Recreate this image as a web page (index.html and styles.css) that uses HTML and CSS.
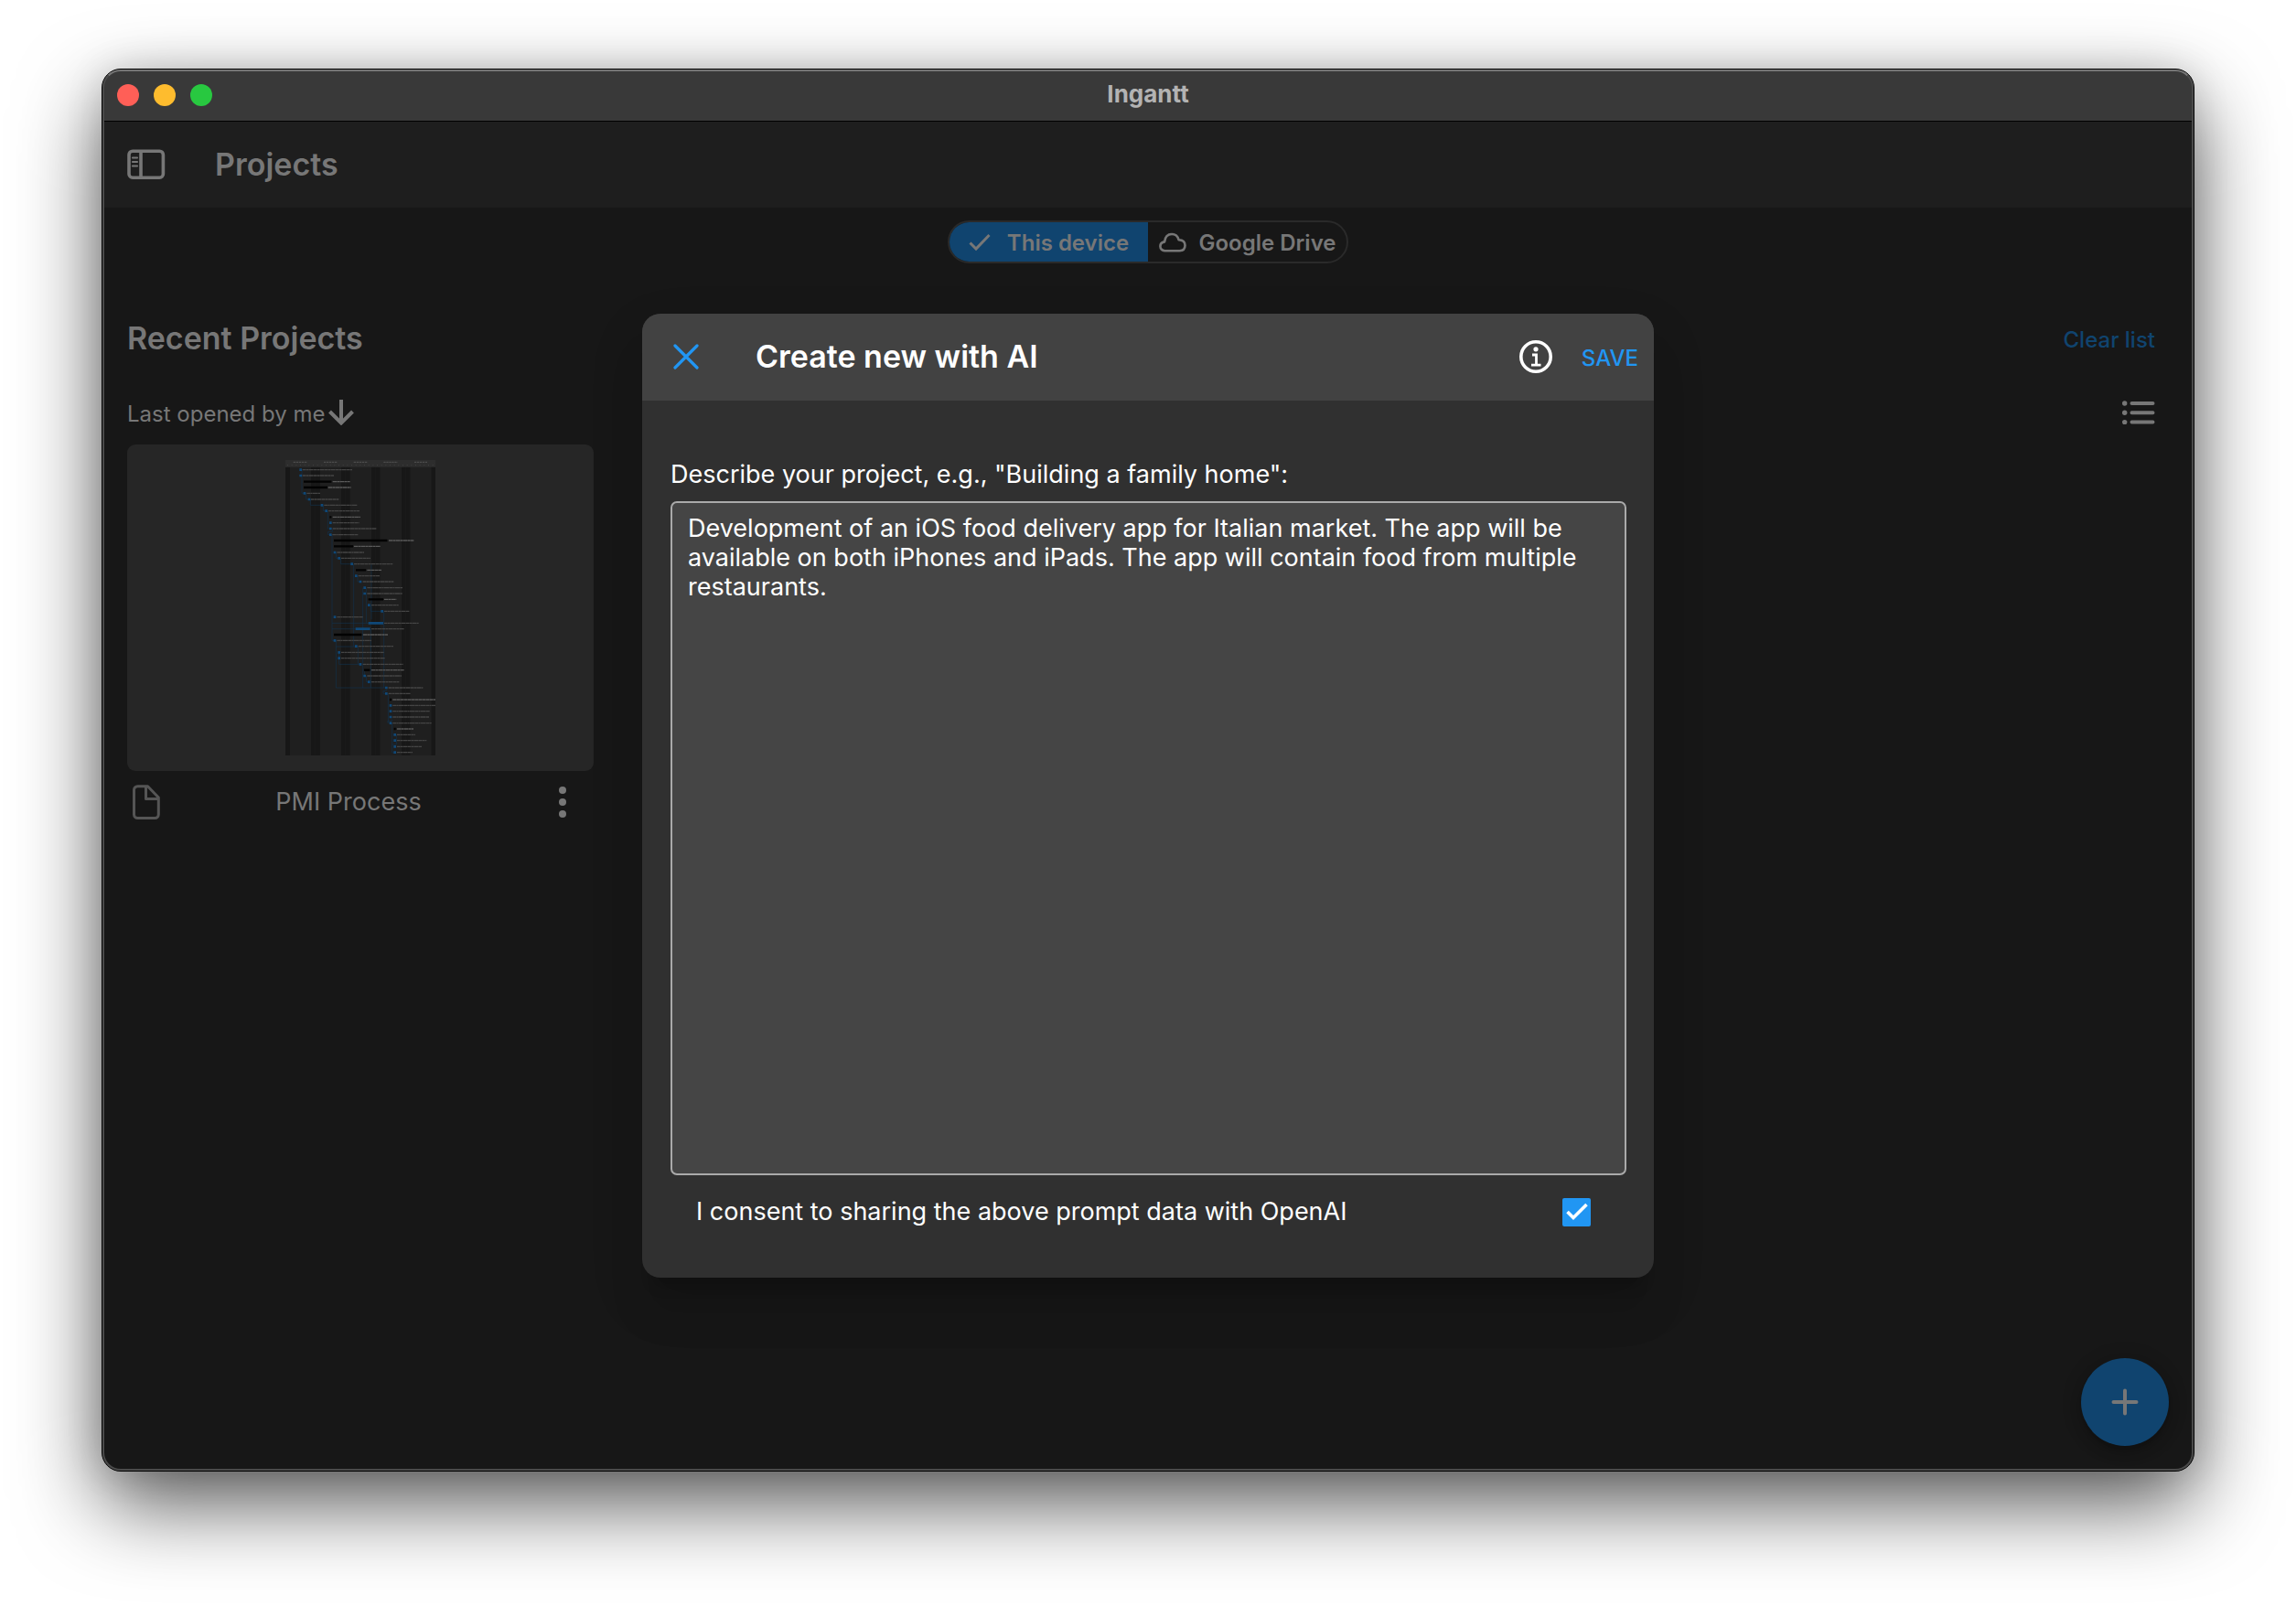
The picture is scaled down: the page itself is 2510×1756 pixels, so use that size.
FILE: index.html
```html
<!DOCTYPE html>
<html lang="en">
<head>
<meta charset="utf-8">
<meta name="viewport" content="width=device-width, initial-scale=1">
<title>Ingantt</title>
<link rel="stylesheet" href="styles.css">
</head>
<body>
<div class="window">
  <header class="titlebar">
    <div class="lights">
      <button class="light light-close" aria-label="Close"></button>
      <button class="light light-minimize" aria-label="Minimize"></button>
      <button class="light light-zoom" aria-label="Zoom"></button>
    </div>
    <div class="window-title">Ingantt</div>
  </header>

  <div class="app">
    <nav class="navbar">
      <button class="icon-button" aria-label="Toggle sidebar">
        <svg width="42" height="34" viewBox="0 0 42 34" fill="none" stroke="currentColor" stroke-width="3.6">
          <rect x="2" y="2.2" width="37.4" height="29" rx="4"/>
          <path d="M15 2v29"/>
          <path d="M6 9.5h5M6 14h5M6 18.5h5" stroke-width="2.2" stroke-linecap="round"/>
        </svg>
      </button>
      <h1 class="navbar-title">Projects</h1>
    </nav>

    <main class="content">
      <div class="segmented">
        <button class="segment segment-active">
          <svg width="24" height="20" viewBox="0 0 24 20" fill="none" stroke="currentColor" stroke-width="3"><path d="M1.5 10.500l6.500 6.500L22.500 2"/></svg>
          <span>This device</span>
        </button>
        <button class="segment">
          <svg width="30" height="22" viewBox="0 0 30 22" fill="none" stroke="currentColor" stroke-width="2.600" stroke-linejoin="round"><path d="M6.500 20.200C3.500 20.200 1.400 18 1.400 15.300c0-2.500 1.900-4.500 4.700-4.900C6.700 5 9.700 2 14 2c4 0 6.600 2.300 7.600 6.300 4.200.2 6.900 2.500 6.900 6 0 3.600-2.300 5.900-6 5.900z"/></svg>
          <span>Google Drive</span>
        </button>
      </div>

      <div class="row heading-row">
        <h2 class="heading">Recent Projects</h2>
        <a class="clear-link" href="#">Clear list</a>
      </div>

      <div class="row sort-row">
        <button class="sort-button">
          <span>Last opened by me</span>
          <svg width="28" height="28" viewBox="0 0 28 28" fill="none" stroke="currentColor" stroke-width="4"><path d="M14 0v26M1.500 13L14 25.500 26.500 13"/></svg>
        </button>
        <button class="icon-button" aria-label="List view">
          <svg width="36" height="26" viewBox="0 0 36 26" stroke="currentColor" fill="currentColor" stroke-linecap="round">
            <path d="M10.500 3h23M10.500 13.300h23M10.500 23.600h23" stroke-width="4"/>
            <g stroke="none"><circle cx="2.700" cy="3" r="2.700"/><circle cx="2.700" cy="13.300" r="2.700"/><circle cx="2.700" cy="23.600" r="2.700"/></g>
          </svg>
        </button>
      </div>

      <article class="project">
        <div class="preview">
          <svg class="gantt" width="164" height="323" viewBox="66 69 492 969" preserveAspectRatio="none" fill="none">
            <rect x="66" y="69" width="492" height="969" fill="#1f1f1f"/>
            <path fill="#171717" d="M66 92h15v946H66zM150 92h30v946h-30zM249 92h29v946h-29zM348 92h28v946h-28zM447 92h28v946h-28zM545 92h13v946h-13z"/>
            <path stroke="#1f1f1f" stroke-width="1.500" d="M163 92v946M262 92v946M361 92v946M460 92v946"/>
            <rect x="66" y="69" width="492" height="23" fill="#2d2d2d"/>
            <path stroke="#4c4c4c" stroke-width="4" stroke-dasharray="7 2" d="M92 76h46M192 76h43M290 76h46M388 76h46M489 76h42"/>
            <path stroke="#414141" stroke-width="3" stroke-dasharray="3 11" d="M72 86h484"/>
            <path stroke="#12324c" stroke-width="2" d="M120 101v77h10M134 178v20h10M148 198v19h38M190 217v19h10M205 236v58h10M220 296v8h-14v10h8M219 314v347h9M219 604h119M219 623h77M232 372v19h10M248 391v19h36M290 410v271M232 681h66M303 449v19h10M320 488v328M331 488v116M346 545v20h37M389 565v251M232 661v155h165M242 700v39h70M304 681v58M325 758v19M331 777v20h10M346 623v193M348 410v182M397 822v4h-10v9h10M403 835v97M416 920v4h-14v8M416 932v97h9M430 970v32h-14"/>
            <path stroke="#0f4878" stroke-width="8" d="M112 101h8M112 120h8M125 178h8M140 198h8M182 217h8M196 236h8M210 275h8M210 294h8M210 314h8M224 372h8M238 391h8M280 410h8M294 449h8M308 468h8M322 488h8M322 507h8M336 545h8M379 565h8M224 584h8M224 661h8M294 680h8M238 700h8M238 719h8M308 739h8M322 777h8M336 797h8M393 816h8M393 835h8M407 874h8M407 893h8M407 912h8M407 932h8M421 970h8M421 989h8M421 1009h8M421 1028h8M338 604h49M296 623h48"/>
            <path stroke="#020202" stroke-width="7" d="M126 140h91M126 159h78M211 256h6M225 333h175M225 352h63M297 430h33M338 526h49M225 642h91M324 758h19M408 855h6M422 951h6"/>
            <path stroke="#454545" stroke-width="4" stroke-dasharray="11 1 7 1 15 1" d="M122 101h163M122 120h103M136 178h44M150 198h92M193 217h109M207 236h102M221 275h87M221 294h144M220 314h85M235 372h89M249 391h96M291 410h127M305 449h70M320 468h101M334 488h116M334 507h115M348 545h89M390 565h82M235 584h86M390 604h113M348 623h108M235 661h113M305 680h115M249 700h140M249 719h144M320 739h132M334 777h113M348 797h91M404 816h113M404 835h73M418 874h140M418 893h122M418 912h120M418 932h127M432 970h60M432 989h97M432 1009h81M432 1028h51"/>
            <path stroke="#5a5a5a" stroke-width="4" stroke-dasharray="13 1 9 1" d="M221 140h57M206 159h75M221 256h91M405 333h82M291 352h87M334 430h48M390 526h40M321 642h81M348 758h107M418 855h140M432 951h54"/>
          </svg>
        </div>
        <div class="project-footer">
          <svg class="file-icon" width="30" height="38" viewBox="0 0 30 38" fill="none" stroke="currentColor" stroke-width="3" stroke-linejoin="round"><path d="M5.500 1.700h11L28.300 14v18.500a4 4 0 0 1-4 4H5.500a4 4 0 0 1-4-4V5.700a4 4 0 0 1 4-4zM14.500 2v13.500H28"/></svg>
          <span class="project-name">PMI Process</span>
          <button class="icon-button more" aria-label="More">
            <svg width="8" height="34" viewBox="0 0 8 34" fill="currentColor"><circle cx="4" cy="4" r="4"/><circle cx="4" cy="17" r="4"/><circle cx="4" cy="30" r="4"/></svg>
          </button>
        </div>
      </article>
    </main>

    <button class="fab" aria-label="New project">
      <svg width="30" height="30" viewBox="0 0 30 30" fill="none" stroke="currentColor" stroke-width="4" stroke-linecap="round"><path d="M15 2.500v25M2.500 15h25"/></svg>
    </button>

    <div class="backdrop">
      <form class="dialog" role="dialog" aria-labelledby="dialog-title">
        <div class="dialog-header">
          <button class="icon-button close" type="button" aria-label="Close">
            <svg width="28" height="28" viewBox="0 0 28 28" fill="none" stroke="currentColor" stroke-width="3.200" stroke-linecap="round"><path d="M2 2l24 24M26 2L2 26"/></svg>
          </button>
          <h2 class="dialog-title" id="dialog-title">Create new with AI</h2>
          <button class="icon-button info" type="button" aria-label="Information">
            <svg width="36" height="36" viewBox="0 0 36 36" fill="none" stroke="currentColor" stroke-width="3.600"><circle cx="18" cy="18" r="16.200"/><circle cx="18" cy="9.800" r="2.600" fill="currentColor" stroke="none"/><path d="M14 16h4.500v11M13 27.200h10.500" stroke-width="2.800"/></svg>
          </button>
          <button class="save" type="button">SAVE</button>
        </div>
        <div class="dialog-body">
          <label class="prompt-label" for="prompt">Describe your project, e.g., "Building a family home":</label>
          <textarea class="prompt" id="prompt" spellcheck="false">Development of an iOS food delivery app for Italian market. The app will be available on both iPhones and iPads. The app will contain food from multiple restaurants.</textarea>
          <div class="consent">
            <label for="consent">I consent to sharing the above prompt data with OpenAI</label>
            <span class="check">
              <input type="checkbox" id="consent" checked>
              <svg width="24" height="20" viewBox="0 0 24 20" fill="none" stroke="#fff" stroke-width="3.600"><path d="M1.500 10l6.500 6.500L22.500 2"/></svg>
            </span>
          </div>
        </div>
      </form>
    </div>
  </div>
</div>
</body>
</html>
```
FILE: styles.css
```css
* {
  box-sizing: border-box;
}

body {
  margin: 0;
  min-height: 100vh;
  padding: 75px 111px 147px;
  display: flex;
  background: #fff;
  color: #777;
  font-family: Inter, "Liberation Sans", sans-serif;
  font-size: 27px;
  line-height: 32px;
}

h1,
h2 {
  margin: 0;
}

button {
  padding: 0;
  border: 0;
  background: none;
  color: inherit;
  font: inherit;
}

svg {
  display: block;
  flex: none;
}

.window {
  position: relative;
  flex: 1;
  display: flex;
  flex-direction: column;
  border: 1px solid #000;
  border-radius: 21px;
  background: #171717;
  box-shadow: 0 36px 90px rgba(0, 0, 0, 0.65), 0 0 40px rgba(0, 0, 0, 0.12);
}

/* Light rim just inside the window edge */
.window::after {
  content: "";
  position: absolute;
  inset: 0;
  border: 2px solid #4a4a4a;
  border-top-color: #757575;
  border-radius: 20px;
  pointer-events: none;
}

.titlebar {
  display: grid;
  grid-template-columns: 1fr auto 1fr;
  align-items: center;
  height: 57px;
  padding: 0 16px;
  border-bottom: 1px solid #000;
  border-radius: 20px 20px 0 0;
  background: #393939;
}

.lights {
  display: flex;
  gap: 16px;
}

.light {
  width: 24px;
  height: 24px;
  border-radius: 50%;
}

.light-close {
  background: #ff5f57;
}

.light-minimize {
  background: #febc2e;
}

.light-zoom {
  background: #28c840;
}

.window-title {
  padding-bottom: 2px;
  color: #b3b3b3;
  font-size: 26px;
  font-weight: 700;
}

.app {
  position: relative;
  flex: 1;
  display: flex;
  flex-direction: column;
}

.navbar {
  display: flex;
  align-items: center;
  gap: 54px;
  height: 94px;
  padding: 0 27px;
  background: #1e1e1e;
}

.navbar-title,
.heading,
.dialog-title {
  font-size: 34px;
  line-height: 40px;
  font-weight: 600;
}

.content {
  flex: 1;
  padding: 14px 27px 28px;
}

.segmented {
  display: grid;
  grid-template-columns: 1fr 1fr;
  width: 438px;
  height: 47px;
  margin: 0 auto;
  overflow: hidden;
  border: 2px solid #2a2a2a;
  border-radius: 24px;
  font-size: 24px;
  font-weight: 600;
}

.segment {
  display: flex;
  align-items: center;
  justify-content: center;
  gap: 14px;
}

.segment span,
.clear-link,
.sort-button span,
.save {
  padding-top: 3px;
}

.segment-active {
  gap: 18px;
  background: #10446f;
}

.row {
  display: flex;
  align-items: center;
  justify-content: space-between;
  height: 48px;
  padding-right: 15px;
}

.heading-row {
  margin-top: 58px;
}

.clear-link {
  color: #10446f;
  font-size: 24px;
  font-weight: 500;
  text-decoration: none;
}

.sort-row {
  margin-top: 33px;
}

.sort-button {
  display: flex;
  align-items: center;
  gap: 3px;
  font-size: 24px;
}

.project {
  width: 510px;
  margin-top: 11px;
}

.preview {
  display: flex;
  justify-content: center;
  padding: 17px 0;
  border-radius: 9px;
  background: #262626;
}

.project-footer {
  display: flex;
  align-items: center;
  height: 67px;
  padding: 0 30px 0 6px;
}

.file-icon {
  color: #555;
}

.project-name {
  flex: 1;
  padding-right: 24px;
  text-align: center;
}

.fab {
  position: absolute;
  right: 27px;
  bottom: 27px;
  display: grid;
  place-items: center;
  width: 96px;
  height: 96px;
  border-radius: 50%;
  background: #10446f;
  box-shadow: 0 6px 12px rgba(0, 0, 0, 0.25), 0 2px 24px rgba(0, 0, 0, 0.12);
}

.backdrop {
  position: absolute;
  inset: 0;
  display: grid;
  place-items: center;
  padding-bottom: 2px;
}

.dialog {
  width: min(1106px, 92%);
  border-radius: 20px;
  background: #303030;
  color: #fff;
  box-shadow: 0 22px 16px -14px rgba(0, 0, 0, 0.2), 0 44px 40px 0 rgba(0, 0, 0, 0.08), 0 24px 60px 8px rgba(0, 0, 0, 0.07);
}

.dialog-header {
  display: flex;
  align-items: center;
  height: 95px;
  padding: 0 17px 0 34px;
  border-radius: 20px 20px 0 0;
  background: #424242;
}

.close {
  color: #2196f3;
}

.dialog-title {
  flex: 1;
  margin-left: 62px;
}

.save {
  margin-left: 32px;
  color: #2196f3;
  font-size: 24px;
  font-weight: 500;
}

.dialog-body {
  display: flex;
  flex-direction: column;
  padding: 65px 30px 31px 31px;
}

.prompt {
  height: 737px;
  margin-top: 13px;
  padding: 12px 17px;
  border: 2px solid #aaa;
  border-radius: 7px;
  outline: 0;
  background: #454545;
  color: #fff;
  font: inherit;
  resize: none;
}

.consent {
  display: flex;
  align-items: center;
  justify-content: space-between;
  height: 81px;
  padding: 0 39px 0 28px;
}

.check {
  display: grid;
  place-items: center;
}

.check > * {
  grid-area: 1 / 1;
}

.check svg {
  pointer-events: none;
}

.check input {
  appearance: none;
  width: 31px;
  height: 31px;
  margin: 0;
  border-radius: 2px;
  background: #2196f3;
}
```
